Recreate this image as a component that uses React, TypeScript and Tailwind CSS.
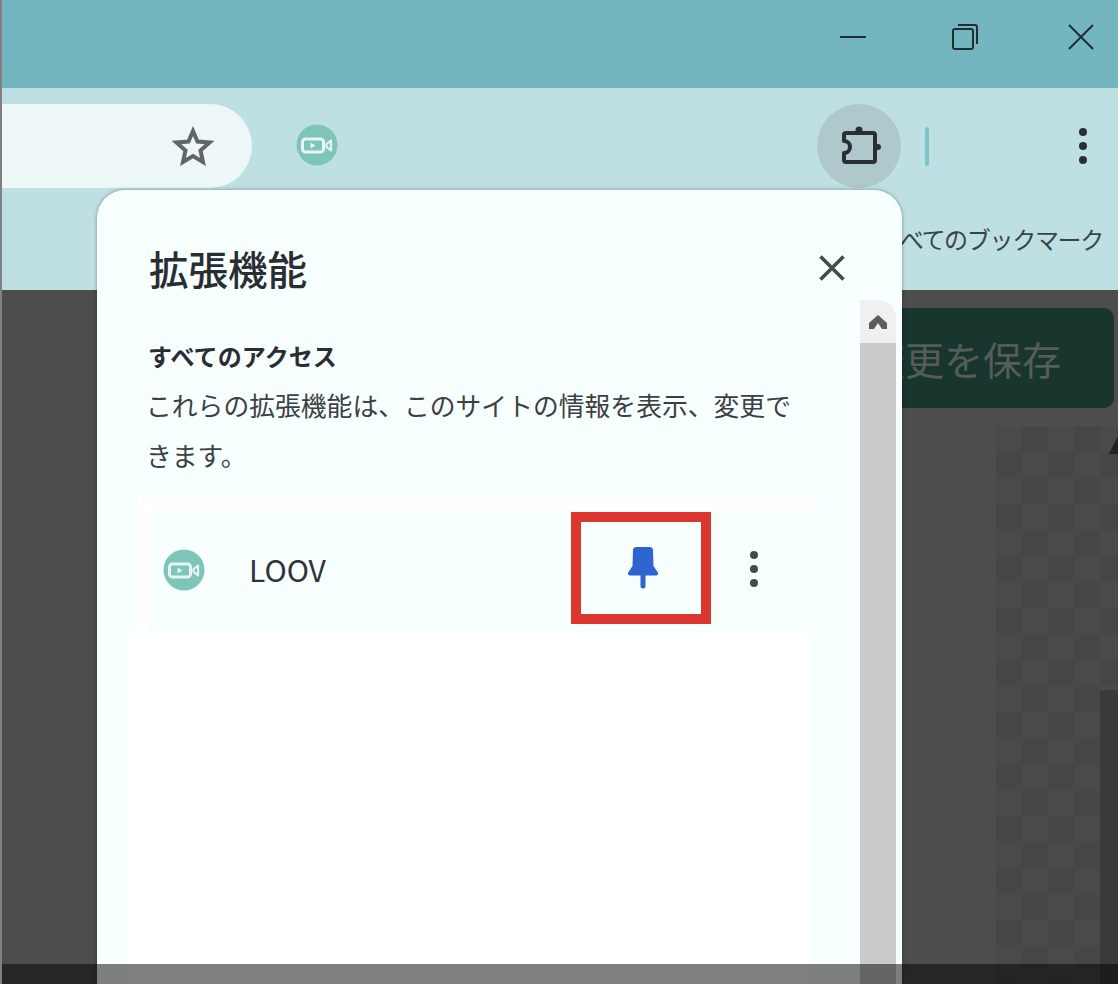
import React from "react";

const FONT = "font-['Noto_Sans_CJK_JP','Noto_Sans',sans-serif]";

function CameraBadge() {
  return (
    <svg width="42" height="42" viewBox="0 0 42 42" className="shrink-0">
      <circle cx="21" cy="21" r="20.5" fill="#7fc4b8" />
      <rect x="6.5" y="15" width="21" height="13" rx="3" fill="none" stroke="#e6f5f2" strokeWidth="3" />
      <path d="M14.5 18.5 L19.5 21.5 L14.5 24.5 Z" fill="#e6f5f2" />
      <path d="M30.5 20 L35 16.5 V26.5 L30.5 23 Z" fill="none" stroke="#e6f5f2" strokeWidth="2.2" strokeLinejoin="round" />
    </svg>
  );
}

function Dots({ color, gap }: { color: string; gap: string }) {
  return (
    <div className={`flex flex-col items-center ${gap}`}>
      <span className={`w-2 h-2 rounded-full ${color}`} />
      <span className={`w-2 h-2 rounded-full ${color}`} />
      <span className={`w-2 h-2 rounded-full ${color}`} />
    </div>
  );
}

function TitleBar() {
  return (
    <div className="h-[88px] bg-[#74b6bf] flex items-start justify-end pt-[24px] pr-[24px] shrink-0">
      <svg width="26" height="26" viewBox="0 0 26 26" className="mr-[86px]">
        <path d="M0 13 H26" stroke="#1f2f33" strokeWidth="2" />
      </svg>
      <svg width="26" height="26" viewBox="0 0 26 26" className="mr-[90px]">
        <rect x="1" y="5" width="20" height="20" rx="2" fill="none" stroke="#1f2f33" strokeWidth="2" />
        <path d="M6 1 H23 A2 2 0 0 1 25 3 V20" fill="none" stroke="#1f2f33" strokeWidth="2" />
      </svg>
      <svg width="26" height="26" viewBox="0 0 26 26">
        <path d="M1 1 L25 25 M25 1 L1 25" stroke="#1f2f33" strokeWidth="2" />
      </svg>
    </div>
  );
}

function Toolbar() {
  return (
    <div className="h-[202px] bg-[#bfe0e2] shrink-0 pt-[16px] flex flex-col">
      <div className="h-[84px] flex items-center">
        <div className="w-[250px] h-full bg-[#eef7f8] rounded-r-[42px] flex items-center justify-end pr-[38px]">
          <svg width="42" height="40" viewBox="0 0 42 40">
            <path
              d="M21 5 L25.5 15.5 L37.5 16.5 L28.5 24.5 L31 36 L21 30 L11 36 L13.5 24.5 L4.5 16.5 L16.5 15.5 Z"
              fill="none"
              stroke="#636569"
              strokeWidth="4"
              strokeLinejoin="miter"
            />
          </svg>
        </div>
        <div className="ml-[44px] -mt-[2px]">
          <CameraBadge />
        </div>
        <div className="ml-[479px] w-[84px] h-[84px] rounded-full bg-[#afc8cb] flex items-center justify-center">
          <svg width="44" height="44" viewBox="0 0 44 44">
            <path
              d="M9 9 H36 A2 2 0 0 1 38 11 V36 A2 2 0 0 1 36 38 H9 A2 2 0 0 1 7 36 V29 A6 6 0 0 0 7 17 V11 A2 2 0 0 1 9 9 Z"
              fill="none"
              stroke="#2b2f33"
              strokeWidth="4"
              strokeLinejoin="round"
            />
            <circle cx="22" cy="6" r="3.5" fill="#2b2f33" />
            <circle cx="41" cy="23" r="3" fill="#2b2f33" />
          </svg>
        </div>
        <div className="ml-[24px] w-[4px] h-[39px] bg-[#7fc3cb] rounded-sm" />
        <div className="ml-[150px]">
          <Dots color="bg-[#2b2f33]" gap="gap-[6px]" />
        </div>
      </div>
      <div className={`mt-[33px] pr-[15px] flex justify-end text-[24px] leading-[36px] tracking-[-1.3px] text-[#3a4446] ${FONT}`}>
        すべてのブックマーク
      </div>
    </div>
  );
}

function PageBehind() {
  return (
    <div className="flex-1 bg-[#4d4d4d] flex flex-col items-end pt-[18px]">
      <div className={`mr-[4px] w-[300px] h-[100px] shrink-0 rounded-[10px] bg-[#18352e] flex items-center pl-[52px] text-[39px] text-[#565c59] whitespace-nowrap ${FONT}`}>
        変更を保存
      </div>
      <div className="relative mt-[18px] w-[122px] flex-1 flex justify-end items-end bg-[repeating-conic-gradient(#454645_0_25%,#4a4a4a_0_50%)] bg-[size:52px_52px]">
        <div className="absolute top-[10px] right-0 w-0 h-0 border-l-[9px] border-r-0 border-b-[18px] border-l-transparent border-b-[#222222]" />
        <div className="w-[18px] h-[294px] bg-[#3a3a3a]" />
      </div>
    </div>
  );
}

function PinRow() {
  return (
    <div className="mt-[17px] ml-[-10px] pt-[13px] bg-white shrink-0 pl-[11px]">
      <div className="h-[122px] bg-[#f8ffff] flex items-center pl-[14px]">
        <div className="-mt-[2px]">
          <CameraBadge />
        </div>
        <span className={`ml-[44px] -mt-[3px] text-[30px] text-[#2e3338] ${FONT}`}>LOOV</span>
        <div className="ml-[245px] -mt-[6px] w-[140px] h-[112px] border-[10px] border-[#dc3631] flex items-center justify-center">
          <svg width="30" height="44" viewBox="0 0 30 44" className="ml-[4px]">
            <path
              d="M5 3.5 A3 3 0 0 1 8 1 H22 A3 3 0 0 1 25 3.5 L25.5 20 L29.5 26 A2 2 0 0 1 28 29.5 H17.5 V40 A2.5 2.5 0 0 1 12.5 40 V29.5 H2 A2 2 0 0 1 0.5 26 L4.5 20 Z"
              fill="#2d64cf"
            />
          </svg>
        </div>
        <div className="ml-[39px] -mt-[4px]">
          <Dots color="bg-[#444b4b]" gap="gap-[6px]" />
        </div>
      </div>
    </div>
  );
}

function ExtensionsPopup() {
  return (
    <div className="absolute left-[95px] top-[190px] w-[805px] h-[794px] bg-[#f8ffff] rounded-t-[28px] shadow-[0_0_4px_rgba(0,0,0,0.35)] flex flex-col overflow-hidden">
      <div className="h-[110px] shrink-0 flex items-start justify-between pl-[52px] pr-[57px] pt-[52px]">
        <span className={`text-[39.5px] leading-[56px] font-medium text-[#2a2e33] -mt-[2px] ${FONT}`}>拡張機能</span>
        <svg width="26" height="26" viewBox="0 0 26 26" className="mt-[13px]">
          <path d="M1.5 1.5 L24.5 24.5 M24.5 1.5 L1.5 24.5" stroke="#444b4b" strokeWidth="3.6" />
        </svg>
      </div>
      <div className="flex-1 flex min-h-0">
        <div className="flex-1 flex flex-col pl-[51px] pr-[42px] pt-[36px] min-w-0">
          <div className={`text-[24px] leading-[40px] tracking-[0.1px] font-semibold text-[#2a2e33] whitespace-nowrap ${FONT}`}>すべてのアクセス</div>
          <p className={`mt-[4px] -ml-[2px] w-[660px] text-[25.8px] leading-[50px] text-[#3c4043] ${FONT}`}>
            これらの拡張機能は、このサイトの情報を表示、変更できます。
          </p>
          <PinRow />
          <div className="flex-1 -ml-[20px] mr-[8px] bg-white" />
        </div>
        <div className="w-[36px] mr-[6px] shrink-0 flex flex-col">
          <div className="h-[43px] bg-[#f0f0f0] rounded-tr-[18px] flex items-center justify-center">
            <svg width="20" height="16" viewBox="0 0 20 16">
              <path d="M10 1 L19 9 V15 L14 15 L10 9 L6 15 H1 V9 Z" fill="#5c5c5c" />
            </svg>
          </div>
          <div className="flex-1 bg-[#cbcbcb]" />
        </div>
      </div>
    </div>
  );
}

export default function App() {
  return (
    <div className="w-[1118px] h-[984px] flex overflow-hidden bg-[#808080]">
      <div className="w-[2px] shrink-0" />
      <div className="relative flex-1 flex flex-col">
        <TitleBar />
        <Toolbar />
        <PageBehind />
        <ExtensionsPopup />
        <div className="absolute left-0 right-0 bottom-0 h-[20px] bg-black/50" />
      </div>
    </div>
  );
}
